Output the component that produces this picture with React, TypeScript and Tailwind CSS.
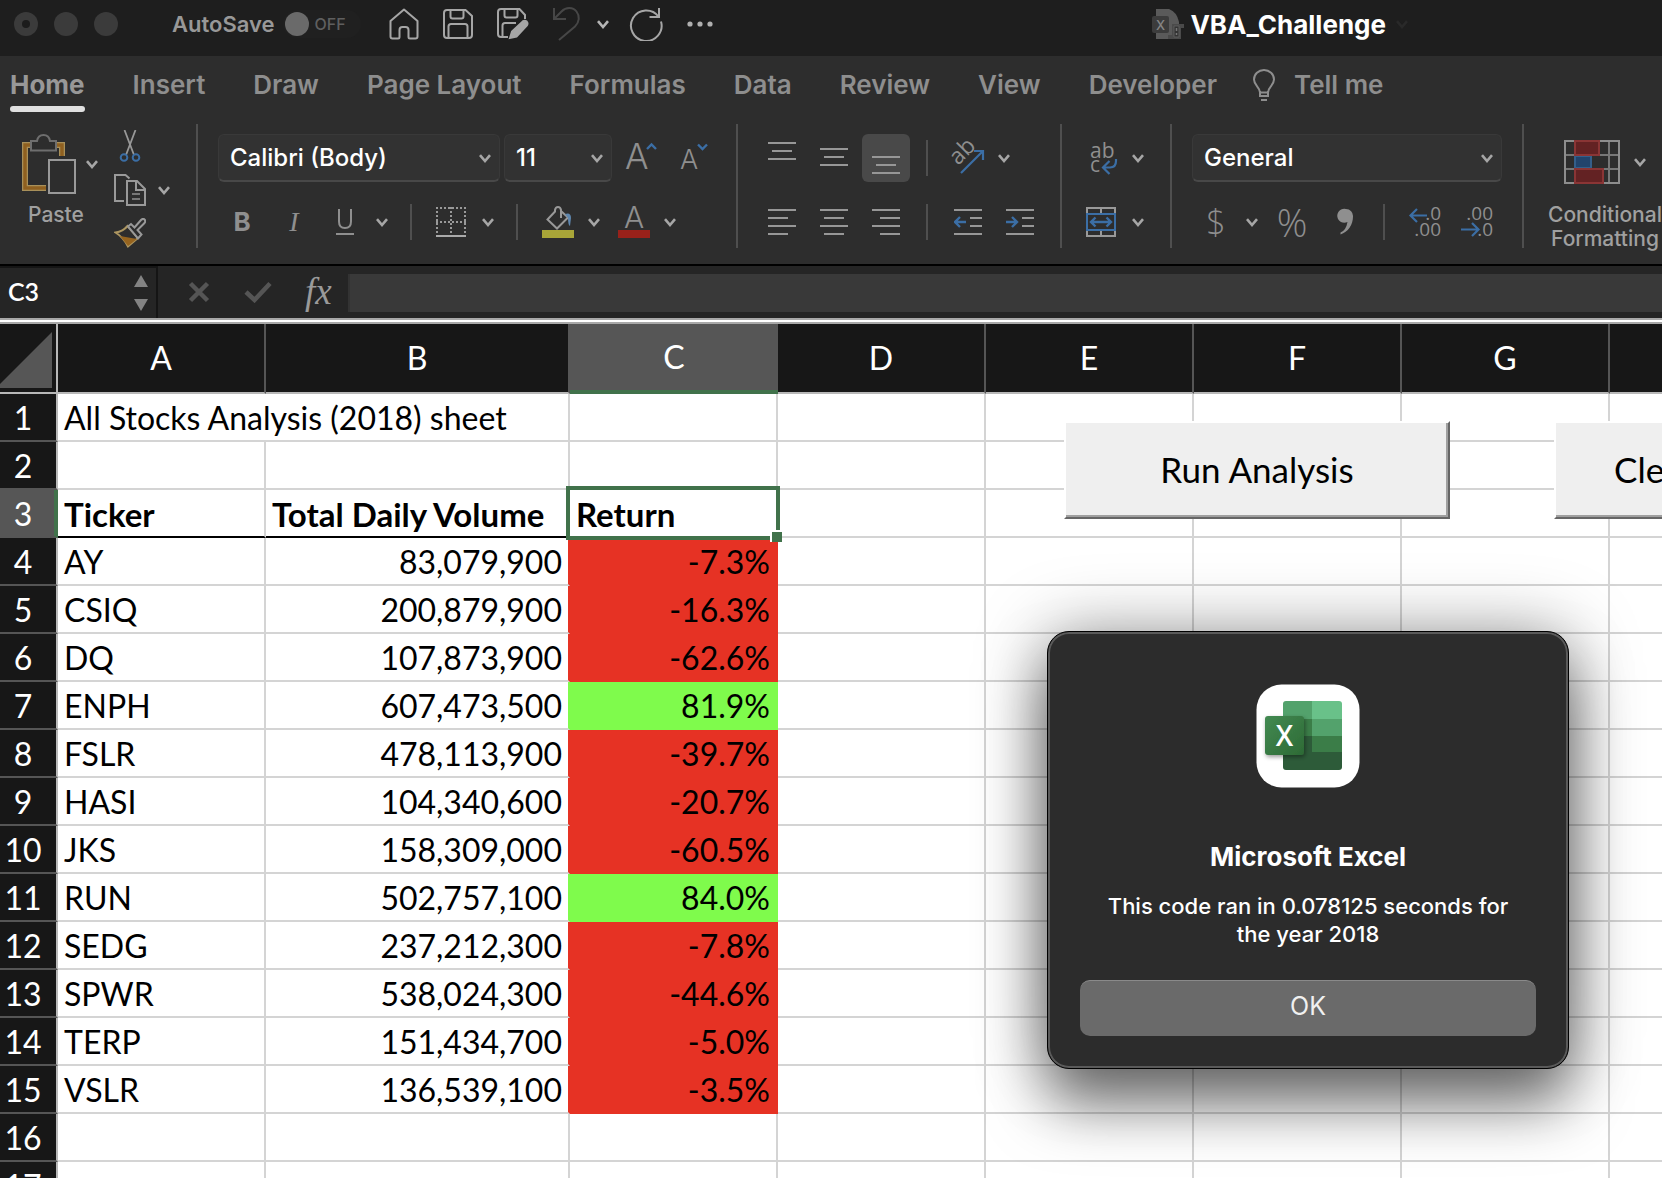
import React from "react";

const ui = "font-['Inter',sans-serif]";
const GREY = "#8f8f8f";
const BLUE = "#3b6ea5";

function Chevron({ className = "text-[#a6a6a6]" }: { className?: string }) {
  return (
    <svg width="12" height="9" viewBox="0 0 12 9" fill="none" stroke="currentColor" strokeWidth="2.6" className={`shrink-0 ${className}`}>
      <path d="M1 1.2 6 7l5-5.8" />
    </svg>
  );
}

function IconButton({ label, className = "", children }: { label: string; className?: string; children: React.ReactNode }) {
  return (
    <button type="button" aria-label={label} className={`flex shrink-0 items-center justify-center ${className}`}>
      {children}
    </button>
  );
}

function Divider() {
  return <div className="h-[124px] w-0.5 shrink-0 bg-[#4f4f4f]" />;
}

function SmallDivider({ className = "" }: { className?: string }) {
  return <div className={`h-9 w-0.5 shrink-0 bg-[#4f4f4f] ${className}`} />;
}

function Combo({ label, value, className }: { label: string; value: string; className: string }) {
  return (
    <div className={`relative h-12 shrink-0 ${className}`}>
      <select
        aria-label={label}
        defaultValue={value}
        className="h-full w-full appearance-none rounded-md border border-b-2 border-[#393939] border-b-[#484848] bg-[#323232] pl-[11px] text-2xl font-medium text-white"
      >
        <option>{value}</option>
      </select>
      <div className="pointer-events-none absolute inset-y-0 right-[9px] flex items-center">
        <Chevron />
      </div>
    </div>
  );
}

function Lines({ rows, h = 28 }: { rows: [number, number, number][]; h?: number }) {
  return (
    <svg width="28" height={h} viewBox={`0 0 28 ${h}`} fill="#979797">
      {rows.map(([x, y, w]) => (
        <rect key={y} x={x} y={y} width={w} height="2" />
      ))}
    </svg>
  );
}

function TitleBar() {
  return (
    <header className="relative flex h-14 shrink-0 items-center bg-[#1e1e1e] pb-2 text-[#a6a6a6]">
      <div className="ml-3.5 flex gap-4">
        <span className="flex size-6 items-center justify-center rounded-full bg-[#3b3b3b]">
          <span className="size-2 rounded-full bg-[#1c1c1c]" />
        </span>
        <span className="size-6 rounded-full bg-[#3b3b3b]" />
        <span className="size-6 rounded-full bg-[#3b3b3b]" />
      </div>
      <label htmlFor="autosave" className="ml-[54px] text-[22px] font-semibold text-[#989898]">AutoSave</label>
      <button id="autosave" type="button" role="switch" aria-checked="false" className="ml-2 flex h-7 w-[78px] items-center gap-1.5 rounded-full bg-[#202020] pl-0.5">
        <span className="size-6 rounded-full bg-[#6a6a6a]" />
        <span className="text-base font-medium text-[#5f5f5f]">OFF</span>
      </button>
      <IconButton label="Home" className="ml-7">
        <svg width="30" height="32" viewBox="0 0 30 32" fill="none" stroke="currentColor" strokeWidth="2" strokeLinejoin="round">
          <path d="M15 1.5 1.5 13v15.5q0 2 2 2H9q1.5 0 1.500-1.500v-7q0-3 3-3h3q3 0 3 3v7q0 1.500 1.500 1.500h5.500q2 0 2-2V13Z" />
        </svg>
      </IconButton>
      <IconButton label="Save" className="ml-6">
        <svg width="30" height="30" viewBox="0 0 30 30" fill="none" stroke="currentColor" strokeWidth="2">
          <path d="M4 1h18.500L29 7v19q0 3-3 3H4q-3 0-3-3V4q0-3 3-3ZM7.500 1v6.500q0 2 2 2h9q2 0 2-2V1M5.500 29V17.500q0-2.500 2.500-2.500h14q2.500 0 2.500 2.500V29" />
        </svg>
      </IconButton>
      <IconButton label="Save as" className="ml-6">
        <svg width="32" height="32" viewBox="0 0 32 32" fill="none" stroke="currentColor" strokeWidth="2">
          <path d="M11 29H4q-3 0-3-3V4q0-3 3-3h18.500L28 7v4M7.500 1v6.500q0 2 2 2h9q2 0 2-2V1M5.500 29V17.500q0-2.500 2.500-2.500h11" />
          <path d="m13 30 2-6.500L26 13.200q2-1.200 3.700.4 1.500 1.800.2 3.800L19.500 28.500Z" fill="currentColor" />
        </svg>
      </IconButton>
      <IconButton label="Undo" className="ml-6 text-[#474747]">
        <svg width="28" height="34" viewBox="0 0 28 34" fill="none" stroke="currentColor" strokeWidth="2">
          <path d="M1 1v11h12M1 12l7.500-7.500C13-.2 20 0 23.500 4.500 27 9 26.500 15 22 19.500L6 33" />
        </svg>
      </IconButton>
      <IconButton label="Undo history" className="ml-4"><Chevron className="text-[#b5b5b5]" /></IconButton>
      <IconButton label="Repeat" className="ml-5">
        <svg width="34" height="34" viewBox="0 0 34 34" fill="none" stroke="currentColor" strokeWidth="2">
          <path d="M32 14.500A15.300 15.300 0 1 1 29.500 9.500M30 1v9H20.500" />
        </svg>
      </IconButton>
      <IconButton label="More" className="ml-6">
        <svg width="26" height="6" viewBox="0 0 26 6" fill="#b0b0b0">
          <circle cx="3" cy="3" r="2.600" /><circle cx="13" cy="3" r="2.600" /><circle cx="23" cy="3" r="2.600" />
        </svg>
      </IconButton>
      <div className="ml-auto mr-[254px] flex items-center">
        <svg width="32" height="32" viewBox="0 0 32 32" className={ui}>
          <path d="M4 1h13q8 3 10 13v17H4Z" fill="#5a5a5a" />
          <path d="M20 16h12v4h-3v11H16v-4h4Z" fill="#4a4a4a" />
          <path d="M22 18h5v11h-5Z" fill="#333" stroke="#5c5c5c" />
          <path d="M24.500 20v3m0 2v2" stroke="#777" strokeWidth="1.500" />
          <rect x="0" y="8" width="17" height="17" rx="2" fill="#3c3c3c" />
          <text x="8.500" y="21.500" fontSize="13" fontWeight="500" textAnchor="middle" fill="#858585">X</text>
        </svg>
        <h1 className="ml-1.5 text-[26px] font-bold text-white">VBA_Challenge</h1>
        <Chevron className="ml-2.5 text-[#292929]" />
      </div>
    </header>
  );
}

const tabs = ["Insert", "Draw", "Page Layout", "Formulas", "Data", "Review", "View", "Developer"];

function Tabs() {
  return (
    <nav className="flex h-14 shrink-0 gap-12 pl-2.5 text-[26px] leading-9 font-semibold whitespace-nowrap text-[#8e8e8e]">
      <button type="button" className="flex flex-col justify-between font-bold text-[#989898]">
        <span className="pt-[11px]">Home</span>
        <span className="h-1.5 w-full rounded-full bg-[#e0e0e0]" />
      </button>
      {tabs.map((t) => (
        <button type="button" key={t} className="pt-0.5">{t}</button>
      ))}
      <button type="button" className="-ml-3 flex items-center gap-[19px] pt-0.5">
        <svg width="22" height="32" viewBox="0 0 22 32" fill="none" stroke="currentColor" strokeWidth="2">
          <path d="M7 23.500C7 18 1 16.500 1 10.500A10 9.500 0 0 1 21 10.500C21 16.500 15 18 15 23.500ZM7 22v5h8v-5M8 31h6" />
        </svg>
        Tell me
      </button>
    </nav>
  );
}

function ClipboardGroup() {
  return (
    <div className="flex w-[196px] shrink-0 pl-[22px]">
      <div className="w-[92px] pt-2.5">
        <div className="flex items-center gap-2.5">
          <svg width="54" height="60" viewBox="0 0 54 60" fill="none">
            <path d="M24 54H3V11h6M34 11h6v11" stroke="#a8905a" strokeWidth="6" />
            <path d="M24 54H3V11h6M34 11h6v11" stroke="#8f6020" strokeWidth="3.500" />
            <path d="M9 16.500V7h6q1-6 6.500-6T28 7h6v9.500Z" fill="#2d2d2d" stroke="#6e6e6e" strokeWidth="2" />
            <path d="M27 26h26v33H27Z" fill="#2d2d2d" stroke="#999" strokeWidth="2" />
          </svg>
          <Chevron />
        </div>
        <button type="button" className="ml-1.5 mt-[5px] block text-[21px] leading-8 font-medium text-[#a0a0a0]">Paste</button>
      </div>
      <div className="flex flex-col gap-3 pt-1.5">
        <IconButton label="Cut" className="size-8">
          <svg width="22" height="32" viewBox="0 0 22 32" fill="none">
            <path d="M5.500 0 15 25M16.500 0 7 25" stroke="#989898" strokeWidth="1.800" />
            <circle cx="5" cy="27.500" r="3.300" stroke={BLUE} strokeWidth="2" />
            <circle cx="17" cy="27.500" r="3.300" stroke={BLUE} strokeWidth="2" />
          </svg>
        </IconButton>
        <div className="flex items-center gap-3">
          <IconButton label="Copy">
            <svg width="32" height="32" viewBox="0 0 32 32" fill="none" stroke="#999" strokeWidth="2">
              <path d="M10 27H1V1h10.500l4 3.500M13 7h10l8 8v16H13ZM22 7v9h9" />
              <path d="M18 20h8m-8 5h8" stroke="#777" />
            </svg>
          </IconButton>
          <Chevron />
        </div>
        <IconButton label="Format painter" className="size-8">
          <svg width="32" height="32" viewBox="0 0 32 32" fill="none" strokeWidth="2">
            <path d="M1.500 14.500Q9 13.500 13.500 8L24 20 14 28.500Q9 19 1.500 14.500Z" stroke="#ad9660" />
            <path d="m6 18 17 3-9 7Z" fill="#96641f" />
            <path d="m14 8.500 3-2.500 3.500 3.500 6.500-7.500q2-2 3.500-.5t0 3.500l-7 7 4 4.500-3.500 4Z" fill="#2d2d2d" stroke="#999" />
          </svg>
        </IconButton>
      </div>
    </div>
  );
}

function FontGroup() {
  return (
    <div className="flex w-[538px] shrink-0 flex-col gap-4 pt-2.5 pl-5">
      <div className="flex h-12 items-center gap-1">
        <Combo label="Font" value="Calibri (Body)" className="w-[282px]" />
        <Combo label="Font size" value="11" className="w-[108px]" />
        <IconButton label="Increase font size" className="ml-2.5">
          <svg width="32" height="36" viewBox="0 0 32 36" className={`overflow-visible ${ui}`}>
            <text x="-1" y="29" fontSize="35" fontWeight="300" fill={GREY}>A</text>
            <path d="m21 9 4.500-4.500L30 9" fill="none" stroke={BLUE} strokeWidth="2.400" />
          </svg>
        </IconButton>
        <IconButton label="Decrease font size" className="ml-[18px]">
          <svg width="30" height="36" viewBox="0 0 30 36" className={`overflow-visible ${ui}`}>
            <text x="0" y="29" fontSize="27" fontWeight="300" fill={GREY}>A</text>
            <path d="m18 4.500 4.500 4.500L27 4.500" fill="none" stroke={BLUE} strokeWidth="2.400" />
          </svg>
        </IconButton>
      </div>
      <div className="flex h-12 items-center text-[#8f8f8f]">
        <button type="button" className="ml-3.5 w-5 text-[26px] leading-8 font-bold">B</button>
        <button type="button" className="ml-8 w-5 font-['Liberation_Serif',serif] text-[28px] leading-8 italic">I</button>
        <IconButton label="Underline" className="ml-[31px]">
          <svg width="20" height="28" viewBox="0 0 20 28" fill="none" stroke={GREY} strokeWidth="2">
            <path d="M4 1v12.500q0 6.500 6 6.500t6-6.500V1M1 26h18" />
          </svg>
        </IconButton>
        <Chevron className="ml-[21px] text-[#a6a6a6]" />
        <SmallDivider className="ml-[22px]" />
        <IconButton label="Borders" className="ml-6">
          <svg width="30" height="30" viewBox="0 0 30 30" fill="none" stroke="#999" strokeWidth="2">
            <path d="M0 1h30M0 15h30M1 0v26M15 0v26M29 0v26" strokeDasharray="2 2" />
            <path d="M0 29h30" stroke="#aaa" />
          </svg>
        </IconButton>
        <Chevron className="ml-4 text-[#a6a6a6]" />
        <SmallDivider className="ml-[22px]" />
        <IconButton label="Fill color" className="ml-6">
          <svg width="32" height="32" viewBox="0 0 32 32" fill="none" stroke="#999" strokeWidth="2">
            <path d="M19 12V4q-.500-3-3-3t-3 3v1.500L5.500 13.500 15 22.500 26 11.500 19 5" />
            <path d="M23 8q6-2 6 4l-1 8q-2-1-2-8Z" fill="#5f86ad" stroke="none" />
            <path d="M0 24h32v8H0Z" fill="#a8a538" stroke="none" />
          </svg>
        </IconButton>
        <Chevron className="ml-3.5 text-[#a6a6a6]" />
        <IconButton label="Font color" className="ml-[18px]">
          <svg width="32" height="32" viewBox="0 0 32 32" className={`overflow-visible ${ui}`}>
            <text x="16" y="22" fontSize="30" fontWeight="300" textAnchor="middle" fill={GREY}>A</text>
            <path d="M0 24h32v8H0Z" fill="#98211a" />
          </svg>
        </IconButton>
        <Chevron className="ml-3.5 text-[#a6a6a6]" />
      </div>
    </div>
  );
}

function AlignmentGroup() {
  return (
    <div className="flex w-[322px] shrink-0 flex-col gap-4 pt-2.5 pl-5">
      <div className="flex h-12 items-center gap-1">
        <IconButton label="Top align" className="size-12"><Lines h={48} rows={[[0, 8, 28], [4, 16, 20], [0, 24, 28]]} /></IconButton>
        <IconButton label="Middle align" className="size-12"><Lines h={48} rows={[[0, 14, 28], [4, 22, 20], [0, 30, 28]]} /></IconButton>
        <IconButton label="Bottom align" className="size-12 rounded-md bg-[#494949]"><Lines h={48} rows={[[0, 22, 28], [4, 30, 20], [0, 38, 28]]} /></IconButton>
        <SmallDivider className="ml-3" />
        <IconButton label="Orientation" className="ml-[18px]">
          <svg width="34" height="36" viewBox="0 0 34 36" className="overflow-visible font-['Open_Sans',sans-serif]">
            <text x="8" y="26" fontSize="23" fill={GREY} transform="rotate(-45 8 26)">ab</text>
            <path d="m11 33 21-21M24 11h9v9" fill="none" stroke={BLUE} strokeWidth="2.200" />
          </svg>
        </IconButton>
        <Chevron className="ml-2.5 text-[#a6a6a6]" />
      </div>
      <div className="flex h-12 items-center gap-1">
        <IconButton label="Align left" className="w-12"><Lines rows={[[0, 1, 28], [0, 9, 20], [0, 17, 28], [0, 25, 20]]} /></IconButton>
        <IconButton label="Center" className="w-12"><Lines rows={[[0, 1, 28], [4, 9, 20], [0, 17, 28], [4, 25, 20]]} /></IconButton>
        <IconButton label="Align right" className="w-12"><Lines rows={[[0, 1, 28], [8, 9, 20], [0, 17, 28], [8, 25, 20]]} /></IconButton>
        <SmallDivider className="ml-3" />
        {["m6 9-5 5 5 5M1 14h11", "m6 9 5 5-5 5M0 14h11"].map((d, i) => (
          <IconButton key={d} label={i ? "Increase indent" : "Decrease indent"} className={i ? "ml-5" : "ml-[22px]"}>
            <svg width="28" height="28" viewBox="0 0 28 28" fill="none" strokeWidth="2">
              <path d="M0 2h28M16 10h12M16 18h12M0 26h28" stroke="#979797" />
              <path d={d} stroke={BLUE} strokeWidth="2.400" />
            </svg>
          </IconButton>
        ))}
      </div>
    </div>
  );
}

function WrapGroup() {
  return (
    <div className="flex w-[108px] shrink-0 flex-col gap-4 pt-2.5 pl-6">
      <div className="flex h-12 items-center gap-3.5">
        <IconButton label="Wrap text">
          <svg width="32" height="36" viewBox="0 0 32 36" className="overflow-visible font-['Open_Sans',sans-serif]">
            <text x="4" y="18" fontSize="21" fill={GREY}>ab</text>
            <text x="4" y="32" fontSize="21" fill={GREY}>c</text>
            <path d="M30 19v2q0 6.500-6 6.500h-7M23.500 21l-6.500 6.500 6.500 6.500" fill="none" stroke={BLUE} strokeWidth="2.200" />
          </svg>
        </IconButton>
        <Chevron />
      </div>
      <div className="flex h-12 items-center gap-4">
        <IconButton label="Merge cells">
          <svg width="30" height="30" viewBox="0 0 30 30" fill="none" stroke="#999" strokeWidth="2">
            <path d="M1 1h28v28H1ZM15 1v28" />
            <path d="M1 7h28v16H1Z" fill="#2d2d2d" stroke={BLUE} />
            <path d="M5 15h20M9.500 10.500 5 15l4.500 4.500m11-9L25 15l-4.500 4.500" stroke={BLUE} strokeWidth="2.400" />
          </svg>
        </IconButton>
        <Chevron />
      </div>
    </div>
  );
}

function NumberGroup() {
  return (
    <div className="flex w-[350px] shrink-0 flex-col gap-4 pt-2.5 pl-5">
      <Combo label="Number format" value="General" className="w-[310px]" />
      <div className="flex h-12 items-center text-[#8f8f8f]">
        <button type="button" className="ml-3 w-6 font-['Open_Sans',sans-serif] text-[34px] leading-10 font-light">$</button>
        <Chevron className="ml-[18px] text-[#a6a6a6]" />
        <button type="button" className="ml-4 w-9 font-['Open_Sans',sans-serif] text-[38px] leading-10 font-light">%</button>
        <IconButton label="Comma style" className="ml-[27px]">
          <svg width="18" height="28" viewBox="0 0 18 28" fill={GREY}>
            <path d="M9 1a7 7 0 0 1 7 7.500C16 17 11 24 3.500 26.500v-2q5.500-2 7-10.500A7 7 0 1 1 9 1Z" />
          </svg>
        </IconButton>
        <SmallDivider className="ml-7" />
        <IconButton label="Increase decimal" className="ml-6">
          <svg width="32" height="32" viewBox="0 0 32 32" className="overflow-visible font-['Open_Sans',sans-serif]">
            <text x="32" y="14" fontSize="19" textAnchor="end" fill={GREY}>.0</text>
            <text x="32" y="30" fontSize="19" textAnchor="end" fill={GREY}>.00</text>
            <path d="m8 3-6.500 6.500L8 16M1.500 9.500H18" fill="none" stroke={BLUE} strokeWidth="2.200" />
          </svg>
        </IconButton>
        <IconButton label="Decrease decimal" className="ml-5">
          <svg width="32" height="32" viewBox="0 0 32 32" className="overflow-visible font-['Open_Sans',sans-serif]">
            <text x="32" y="14" fontSize="19" textAnchor="end" fill={GREY}>.00</text>
            <text x="32" y="30" fontSize="19" textAnchor="end" fill={GREY}>.0</text>
            <path d="m11 17 6.500 6.500L11 30M0 23.500h17.500" fill="none" stroke={BLUE} strokeWidth="2.200" />
          </svg>
        </IconButton>
      </div>
    </div>
  );
}

function ConditionalGroup() {
  return (
    <div className="shrink-0 pt-4 pl-6">
      <div className="ml-4 flex items-center gap-3.5">
        <svg width="56" height="44" viewBox="0 0 56 44" fill="none" strokeWidth="2">
          <path d="M1 15h54M1 29h54M45 1v42M11 1v42" stroke="#777" />
          <path d="M1 1h54v42H1Z" stroke="#8d8d8d" />
          <path d="M11 16h16v12H11Z" fill="#22446c" stroke="#345f8a" />
          <path d="M11 1h24v14H11ZM11 29h28v14H11Z" fill="#632223" stroke="#8a3535" />
        </svg>
        <Chevron />
      </div>
      <button type="button" className="mt-[19px] text-center text-[21px] leading-6 font-medium text-[#a0a0a0]">
        Conditional<br />Formatting
      </button>
    </div>
  );
}

function FormulaBar() {
  return (
    <div className="flex h-[54px] shrink-0 border-t-2 border-black bg-[#252525]">
      <div className="flex w-[158px] shrink-0 items-center justify-between border-t-2 border-r-2 border-[#151515] pr-[7px] pl-2">
        <input aria-label="Name box" defaultValue="C3" className="w-24 bg-transparent pb-0.5 font-['Lato',sans-serif] text-[25px] font-semibold text-white" />
        <svg width="16" height="36" viewBox="0 0 16 36" fill="#838383">
          <path d="m8 0 7 12H1ZM8 36l7-12H1Z" />
        </svg>
      </div>
      <div className="flex w-[190px] shrink-0 items-center pl-[30px]">
        <IconButton label="Cancel">
          <svg width="22" height="22" viewBox="0 0 22 22" stroke="#555" strokeWidth="4.500"><path d="m2.500 2.500 17 17m0-17-17 17" /></svg>
        </IconButton>
        <IconButton label="Enter" className="ml-[34px]">
          <svg width="28" height="22" viewBox="0 0 28 22" fill="none" stroke="#555" strokeWidth="4.500"><path d="m2 11 8.500 8L26 2.500" /></svg>
        </IconButton>
        <button type="button" className="ml-[33px] font-['Liberation_Serif',serif] text-[37px] leading-10 text-[#9a9a9a] italic">fx</button>
      </div>
      <input aria-label="Formula" className="my-2 h-[38px] min-w-0 flex-1 border-l-2 border-[#333] bg-[#393939] px-2 text-white" />
    </div>
  );
}

const columns = ["A", "B", "C", "D", "E", "F", "G", "H", "I", "J", "K", "L"];

const stocks: [string, string, string][] = [
  ["AY", "83,079,900", "-7.3%"],
  ["CSIQ", "200,879,900", "-16.3%"],
  ["DQ", "107,873,900", "-62.6%"],
  ["ENPH", "607,473,500", "81.9%"],
  ["FSLR", "478,113,900", "-39.7%"],
  ["HASI", "104,340,600", "-20.7%"],
  ["JKS", "158,309,000", "-60.5%"],
  ["RUN", "502,757,100", "84.0%"],
  ["SEDG", "237,212,300", "-7.8%"],
  ["SPWR", "538,024,300", "-44.6%"],
  ["TERP", "151,434,700", "-5.0%"],
  ["VSLR", "136,539,100", "-3.5%"],
];

const cell = "border-r-2 border-b-2 border-[#d4d4d4] p-0 pt-0.5 pl-1.5";

function Blanks({ from }: { from: number }) {
  return (
    <>
      {columns.slice(from).map((c) => (
        <td key={c} className={cell} />
      ))}
    </>
  );
}

function RowHead({ n }: { n: number }) {
  return (
    <th
      scope="row"
      className={
        n === 3
          ? "border-r-4 border-b-2 border-r-[#41724b] border-b-[#565656] bg-[#565656] p-0 pt-0.5 pr-2 text-[32px] font-normal text-white"
          : "border-r-2 border-b-2 border-r-[#b8b8b8] border-b-[#555] bg-[#171717] p-0 pt-0.5 pr-2.5 text-[32px] font-normal text-white"
      }
    >
      {n}
    </th>
  );
}

function Sheet() {
  return (
    <table className="w-[2650px] table-fixed border-separate border-spacing-0 bg-white font-['Lato',sans-serif] text-[32px] leading-[44px] text-black">
      <colgroup>
        <col className="w-[58px]" />
        {columns.map((c) => (
          <col key={c} className={c === "B" ? "w-[304px]" : "w-[208px]"} />
        ))}
      </colgroup>
      <thead>
        <tr className="h-[70px]">
          <th className="border-r-2 border-b-2 border-[#b8b8b8] bg-[#171717] p-0 align-top">
            <svg width="52" height="66" viewBox="0 0 52 66"><path d="M52 8v56H0v-4Z" fill="#565656" /></svg>
          </th>
          {columns.map((c) => (
            <th
              key={c}
              scope="col"
              className={
                c === "C"
                  ? "border-b-4 border-[#41724b] bg-[#565656] p-0 font-normal text-white"
                  : c === "B"
                    ? "border-r-2 border-b-2 border-r-[#565656] border-b-[#b8b8b8] bg-[#171717] p-0 font-normal text-white"
                    : "border-r-2 border-b-2 border-r-[#555] border-b-[#b8b8b8] bg-[#171717] p-0 font-normal text-white"
              }
            >
              {c}
            </th>
          ))}
        </tr>
      </thead>
      <tbody>
        <tr className="h-12">
          <RowHead n={1} />
          <td colSpan={2} className={cell}>All Stocks Analysis (2018) sheet</td>
          <Blanks from={2} />
        </tr>
        <tr className="h-12"><RowHead n={2} /><Blanks from={0} /></tr>
        <tr className="h-12 text-[33px] font-bold">
          <RowHead n={3} />
          <td className={`${cell} border-b-black`}>Ticker</td>
          <td className={`${cell} border-b-black whitespace-nowrap`}>Total Daily Volume</td>
          <td className={`${cell} relative`}>
            Return
            <span className="absolute -top-1 -right-1 -bottom-1 -left-1 border-4 border-[#41724b]" />
            <span className="absolute -right-1.5 -bottom-1.5 size-3 border-t-2 border-l-2 border-white bg-[#41724b]" />
          </td>
          <Blanks from={3} />
        </tr>
        {stocks.map(([ticker, volume, ret], i) => {
          const down = ret.startsWith("-");
          return (
            <tr key={ticker} className="h-12">
              <RowHead n={i + 4} />
              <td className={cell}>{ticker}</td>
              <td className={`border-r-2 border-b-2 border-b-[#d4d4d4] p-0 pt-0.5 pr-1.5 text-right ${down ? "border-r-[#e63224]" : "border-r-[#7ffb4c]"}`}>{volume}</td>
              <td className={`border-b-2 p-0 pt-0.5 pr-2 text-right ${down ? "border-[#e63224] bg-[#e63224]" : "border-[#7ffb4c] bg-[#7ffb4c]"}`}>{ret}</td>
              <Blanks from={3} />
            </tr>
          );
        })}
        {[16, 17, 18, 19, 20, 21, 22, 23, 24].map((n) => (
          <tr key={n} className="h-12"><RowHead n={n} /><Blanks from={0} /></tr>
        ))}
      </tbody>
    </table>
  );
}

const sheetButton =
  "absolute top-[97px] h-[98px] w-[386px] border-2 border-t-white border-r-[#666] border-b-[#666] border-l-white bg-[#efefef] pb-0.5 font-['Lato',sans-serif] text-[35px] text-black shadow-[inset_-2px_-2px_0_#a0a0a0]";

function ExcelLogo() {
  return (
    <svg width="104" height="104" viewBox="0 0 104 104" className={ui}>
      <defs>
        <linearGradient id="tile" x1="0" y1="0" x2="1" y2="1">
          <stop offset="0" stopColor="#438a52" /><stop offset="1" stopColor="#2d6a35" />
        </linearGradient>
        <filter id="soft" x="-20%" y="-20%" width="150%" height="150%">
          <feDropShadow dx="1" dy="2" stdDeviation="2" floodOpacity="0.4" />
        </filter>
        <clipPath id="book"><rect x="27" y="17" width="59" height="69" rx="3" /></clipPath>
      </defs>
      <rect x="0.500" y="0.500" width="103" height="103" rx="25" fill="#fff" />
      <g clipPath="url(#book)">
        <path d="M27 17h29v18H27Z" fill="#53a26c" />
        <path d="M56 17h30v18H56Z" fill="#69c189" />
        <path d="M27 35h29v17H27Z" fill="#3b7d48" />
        <path d="M56 35h30v17H56Z" fill="#53a26c" />
        <path d="M27 52h29v34H27ZM56 68h30v18H56Z" fill="#2d5b39" />
        <path d="M56 52h30v16H56Z" fill="#3b7d48" />
      </g>
      <rect x="9" y="32" width="39" height="39" rx="3" fill="url(#tile)" filter="url(#soft)" />
      <text x="28.500" y="61.500" fontSize="28" fontWeight="600" textAnchor="middle" fill="#fff" className="font-['Open_Sans',sans-serif]">X</text>
    </svg>
  );
}

function Dialog() {
  return (
    <div
      role="alertdialog"
      aria-labelledby="dialog-title"
      className="absolute top-[307px] left-[1047px] flex w-[522px] flex-col items-center rounded-[22px] border border-black bg-[#2c2c2c] px-8 pt-[52px] pb-8 text-center text-white shadow-[inset_0_0_0_2px_#5a5a5a,0_36px_60px_rgba(0,0,0,0.5),0_0_70px_rgba(0,0,0,0.35)]"
    >
      <ExcelLogo />
      <h2 id="dialog-title" className="mt-[51px] text-[26px] leading-9 font-bold">Microsoft Excel</h2>
      <p className="mt-[17px] w-[410px] text-[22px] leading-7 font-medium">This code ran in 0.078125 seconds for the year 2018</p>
      <button type="button" className="mt-8 h-14 w-full rounded-[10px] border-t border-[#8a8a8a] bg-[#6a6a6a] pb-1 text-[25px] text-[#f0f0f0]">OK</button>
    </div>
  );
}

export default function App() {
  return (
    <div className={`flex h-screen flex-col overflow-hidden bg-[#2d2d2d] ${ui}`}>
      <TitleBar />
      <Tabs />
      <div className="flex h-[152px] shrink-0 overflow-hidden pt-3">
        <ClipboardGroup />
        <Divider />
        <FontGroup />
        <Divider />
        <AlignmentGroup />
        <Divider />
        <WrapGroup />
        <Divider />
        <NumberGroup />
        <Divider />
        <ConditionalGroup />
      </div>
      <FormulaBar />
      <div className="h-1.5 shrink-0 border-y-2 border-[#a8a8a8] bg-white" />
      <main className="relative min-h-0 flex-1 overflow-hidden bg-white">
        <Sheet />
        <button type="button" className={`${sheetButton} left-[1064px]`}>Run Analysis</button>
        <button type="button" className={`${sheetButton} left-[1554px] pl-[58px] text-left`}>Clear</button>
        <Dialog />
      </main>
    </div>
  );
}
